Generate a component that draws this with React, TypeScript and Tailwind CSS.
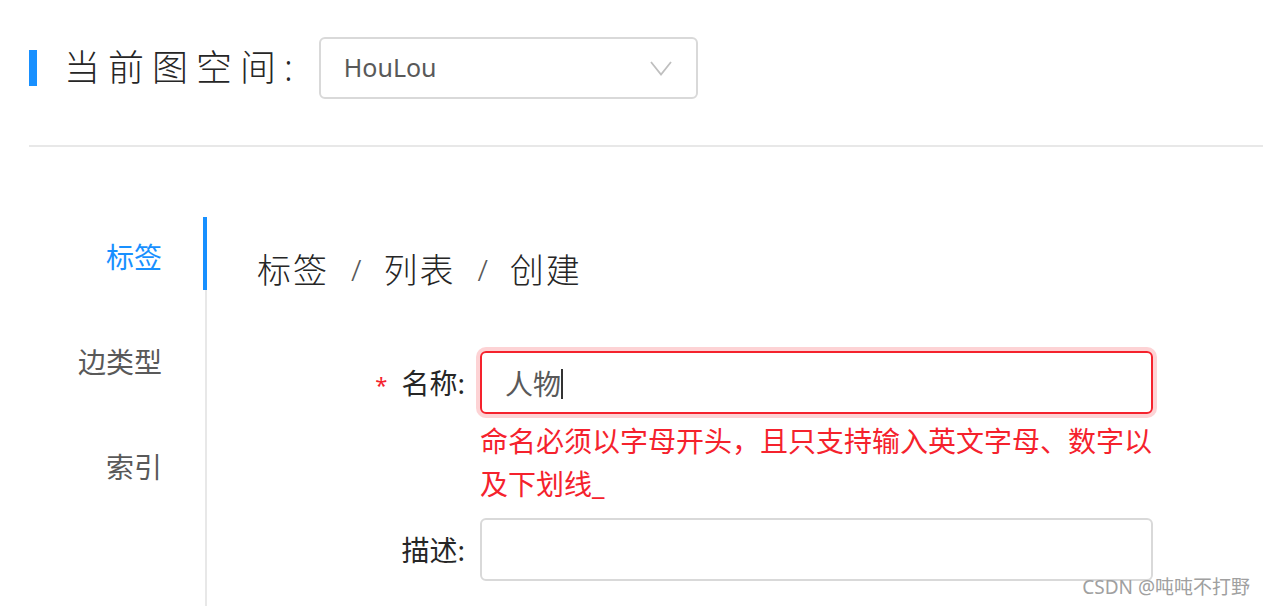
import { useState } from 'react';

const tabs = ['标签', '边类型', '索引'];
const crumbs = ['标签', '列表', '创建'];

export default function App() {
  const [active, setActive] = useState(0);
  const [name, setName] = useState('人物');

  return (
    <div className="relative min-h-[607px] bg-white pl-[29px] font-['Noto_Sans','Noto_Sans_CJK_SC',sans-serif] text-[#303133]">
      {/* Header */}
      <div className="flex items-center pt-[37px]">
        <div className="h-[36px] w-[8px] bg-[#1890ff]" />
        <h1 className="ml-[27px] text-[36px] leading-[40px] font-light tracking-[8px] text-[#262626]">
          当前图空间:
        </h1>
        <button className="ml-[18px] flex h-[62px] w-[379px] items-center justify-between rounded-[6px] border-2 border-[#d9d9d9] bg-white pl-[23px] pr-[24px] text-[25px] text-[#595959]">
          <span>HouLou</span>
          <svg width="22" height="15" viewBox="0 0 22 15" fill="none">
            <path d="M1 1 L11 13.5 L21 1" stroke="#bfbfbf" strokeWidth="1.8" />
          </svg>
        </button>
      </div>

      <div className="mt-[46px] h-[2px] bg-[#e8e8e8]" />

      {/* Body */}
      <div className="mt-[70px] flex">
        {/* Left tabs */}
        <div className="w-[178px] border-r-2 border-[#e8e8e8] min-h-[389px]">
          <ul className="flex flex-col gap-[32px]">
            {tabs.map((t, i) => (
              <li key={t} className="relative -mr-[2px]">
                <button
                  onClick={() => setActive(i)}
                  className={`flex h-[73px] w-full items-center justify-end pr-[45px] pt-[6px] text-[28px] ${
                    active === i ? 'text-[#1890ff]' : 'text-[#595959]'
                  }`}
                >
                  {t}
                </button>
                {active === i && <span className="absolute right-0 top-0 h-[73px] w-[4px] bg-[#1890ff]" />}
              </li>
            ))}
          </ul>
        </div>

        {/* Content */}
        <div className="ml-[50px] flex-1">
          <div className="mt-[33px] flex items-center text-[34px] font-light leading-[40px] text-[#262626]">
            {crumbs.map((c, i) => (
              <span key={c} className="flex items-center">
                {i > 0 && <span className="mx-[22px] text-[30px] text-[#595959]">/</span>}
                <span className="tracking-[2px]">{c}</span>
              </span>
            ))}
          </div>

          <form className="mt-[61px] grid grid-cols-[208px_673px] gap-x-[15px]">
            <label className="flex h-[63px] items-center justify-end text-[28px] text-[#262626]">
              <span className="mr-[14px] mt-[4px] text-[22px] text-[#f5222d]">*</span>
              名称:
            </label>
            <div className="relative">
              <input
                autoFocus
                value={name}
                onChange={(e) => setName(e.target.value)}
                className="h-[63px] w-full rounded-[6px] border-2 border-[#f5222d] px-[23px] text-[28px] text-[#595959] caret-[#333] outline-none shadow-[0_0_0_4px_rgba(245,34,45,0.2)]"
              />
              {/* caret marker */}
              <span className="pointer-events-none absolute left-[81px] top-[18px] h-[30px] w-[2px] bg-[#333]" />
              <p className="mt-[6px] text-[28px] leading-[43px] text-[#f5222d]">
                命名必须以字母开头，且只支持输入英文字母、数字以及下划线_
              </p>
            </div>

            <label className="mt-[12px] flex h-[63px] items-center justify-end text-[28px] text-[#262626]">
              描述:
            </label>
            <div className="mt-[12px]">
              <input className="h-[63px] w-full rounded-[6px] border-2 border-[#d9d9d9] px-[23px] text-[28px] outline-none" />
            </div>
          </form>
        </div>
      </div>

      {/* Watermark */}
      <span className="absolute bottom-[6px] right-[13px] text-[19px] text-[#a0a0a0]">CSDN @吨吨不打野</span>
    </div>
  );
}
